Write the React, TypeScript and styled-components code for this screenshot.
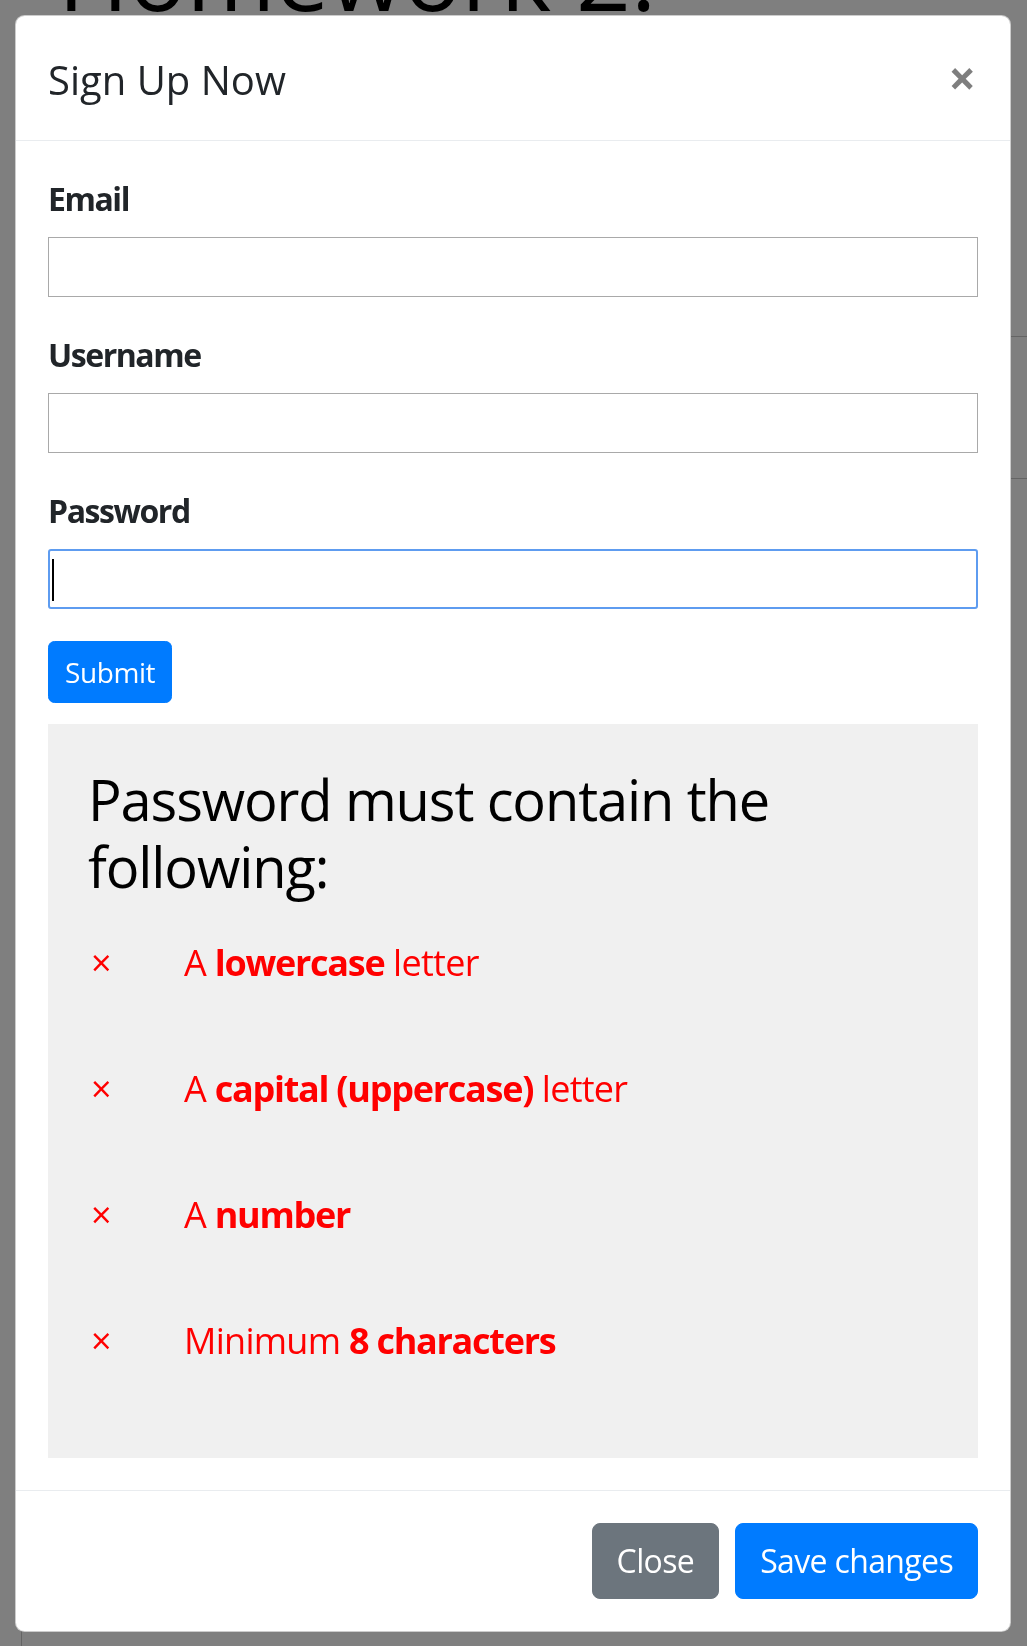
import styled, { createGlobalStyle } from 'styled-components';

const GlobalStyle = createGlobalStyle`
  html, body {
    margin: 0;
    padding: 0;
    background: #ffffff;
  }
  body {
    font-family: 'Open Sans', 'Noto Sans', 'DejaVu Sans', sans-serif;
    color: #212529;
  }
  * {
    box-sizing: border-box;
  }
`;

// the page that sits under the modal backdrop
const PageBehind = styled.div`
  height: 1646px;
  overflow: hidden;
`;

const PageTitle = styled.h1`
  margin: -84px 0 0 58px;
  font-size: 96px;
  font-weight: 400;
  line-height: 1.2;
  color: #000;
  white-space: nowrap;
`;

const PagePanel = styled.div`
  margin: 305px 0 0 21px;
  width: 1200px;
  height: 1400px;
  border: 1px solid #c8c8c8;
`;

const PanelRow = styled.div`
  height: 142px;
  border-bottom: 1px solid #c8c8c8;
`;

const Backdrop = styled.div`
  position: fixed;
  inset: 0;
  background: rgba(0, 0, 0, 0.5);
  padding: 15px 16px 0 15px;
`;

const Dialog = styled.div`
  width: 996px;
  background: #fff;
  border: 1px solid rgba(0, 0, 0, 0.2);
  border-radius: 9.6px;
  overflow: hidden;
`;

const Header = styled.div`
  display: flex;
  align-items: flex-start;
  padding: 34px 32px 30px;
  border-bottom: 1px solid #e9ecef;
`;

const Title = styled.h5`
  margin: 0;
  font-size: 40px;
  font-weight: 400;
  line-height: 1.5;
  color: #212529;
`;

const CloseX = styled.button`
  margin: -34px -32px -30px auto;
  padding: 38px 34px 26px 32px;
  background: transparent;
  border: 0;
  font-family: inherit;
  font-size: 48px;
  font-weight: 700;
  line-height: 1;
  color: #000;
  opacity: 0.5;
`;

const Body = styled.div`
  padding: 32px;
`;

const FormGroup = styled.div`
  margin-bottom: 32px;
`;

const Label = styled.label`
  display: inline-block;
  padding-top: 2px;
  margin-bottom: 14px;
  font-size: 32px;
  font-weight: 700;
  line-height: 48px;
  letter-spacing: -0.045em;
  color: #212529;
`;

const InputWrap = styled.div`
  position: relative;
`;

const TextInput = styled.input<{ $focused?: boolean }>`
  display: block;
  width: 100%;
  height: 60px;
  padding: 0 ${(p) => (p.$focused ? '3px' : '4px')};
  font-family: inherit;
  font-size: 32px;
  border: ${(p) => (p.$focused ? '2px solid #5e9cf0' : '1px solid #a9a9a9')};
  border-radius: ${(p) => (p.$focused ? '3px' : '0')};
  outline: none;
`;

const Caret = styled.span`
  position: absolute;
  left: 4px;
  top: 10px;
  width: 2px;
  height: 42px;
  background: #000;
`;

const Button = styled.button<{ $variant?: 'primary' | 'secondary'; $small?: boolean }>`
  display: inline-block;
  font-family: inherit;
  font-weight: 400;
  font-size: ${(p) => (p.$small ? '28px' : '32px')};
  line-height: 1.5;
  letter-spacing: ${(p) => (p.$small ? '-0.015em' : '-0.02em')};
  padding: ${(p) => (p.$small ? '9px 16px' : '13px 24px')};
  border: 1px solid ${(p) => (p.$variant === 'secondary' ? '#6c757d' : '#007bff')};
  border-radius: ${(p) => (p.$small ? '6.4px' : '8px')};
  background: ${(p) => (p.$variant === 'secondary' ? '#6c757d' : '#007bff')};
  color: #fff;
`;

const Rules = styled.div`
  margin-top: 21px;
  padding: 42px 40px 90px;
  background: #f0f0f0;
`;

const RulesHeading = styled.h3`
  margin: 0 0 36px;
  font-size: 56px;
  font-weight: 400;
  line-height: 1.2;
  letter-spacing: -0.02em;
  color: #000;
`;

const RuleList = styled.div`
  display: flex;
  flex-direction: column;
  gap: 72px;
`;

const Rule = styled.div<{ $valid?: boolean }>`
  display: flex;
  font-size: 36px;
  line-height: 54px;
  letter-spacing: -0.02em;
  color: ${(p) => (p.$valid ? '#28a745' : '#ff0000')};

  b {
    font-weight: 700;
    letter-spacing: -0.035em;
  }
`;

const RuleMark = styled.span`
  width: 96px;
  flex-shrink: 0;
  padding-left: 3px;
`;

const Footer = styled.div`
  display: flex;
  justify-content: flex-end;
  align-items: center;
  padding: 24px;
  border-top: 1px solid #e9ecef;

  > * {
    margin: 8px;
  }
`;

const rules = [
  { id: 'lower', text: <>A <b>lowercase</b> letter</> },
  { id: 'upper', text: <>A <b>capital (uppercase)</b> letter</> },
  { id: 'number', text: <>A <b>number</b></> },
  { id: 'length', text: <>Minimum <b>8 characters</b></> },
];

const App = () => {
  return (
    <>
      <GlobalStyle />
      <PageBehind>
        <PageTitle>Homework 2:</PageTitle>
        <PagePanel>
          <PanelRow />
        </PagePanel>
      </PageBehind>
      <Backdrop>
        <Dialog>
          <Header>
            <Title>Sign Up Now</Title>
            <CloseX type="button" aria-label="Close">
              ×
            </CloseX>
          </Header>
          <Body>
            <FormGroup>
              <Label htmlFor="email">Email</Label>
              <TextInput id="email" type="email" />
            </FormGroup>
            <FormGroup>
              <Label htmlFor="username">Username</Label>
              <TextInput id="username" type="text" />
            </FormGroup>
            <FormGroup>
              <Label htmlFor="password">Password</Label>
              <InputWrap>
                <TextInput id="password" type="password" $focused />
                <Caret />
              </InputWrap>
            </FormGroup>
            <Button $small type="submit">
              Submit
            </Button>
            <Rules>
              <RulesHeading>Password must contain the following:</RulesHeading>
              <RuleList>
                {rules.map((rule) => (
                  <Rule key={rule.id}>
                    <RuleMark>×</RuleMark>
                    <span>{rule.text}</span>
                  </Rule>
                ))}
              </RuleList>
            </Rules>
          </Body>
          <Footer>
            <Button $variant="secondary" type="button">
              Close
            </Button>
            <Button type="button">Save changes</Button>
          </Footer>
        </Dialog>
      </Backdrop>
    </>
  );
};

export default App;
